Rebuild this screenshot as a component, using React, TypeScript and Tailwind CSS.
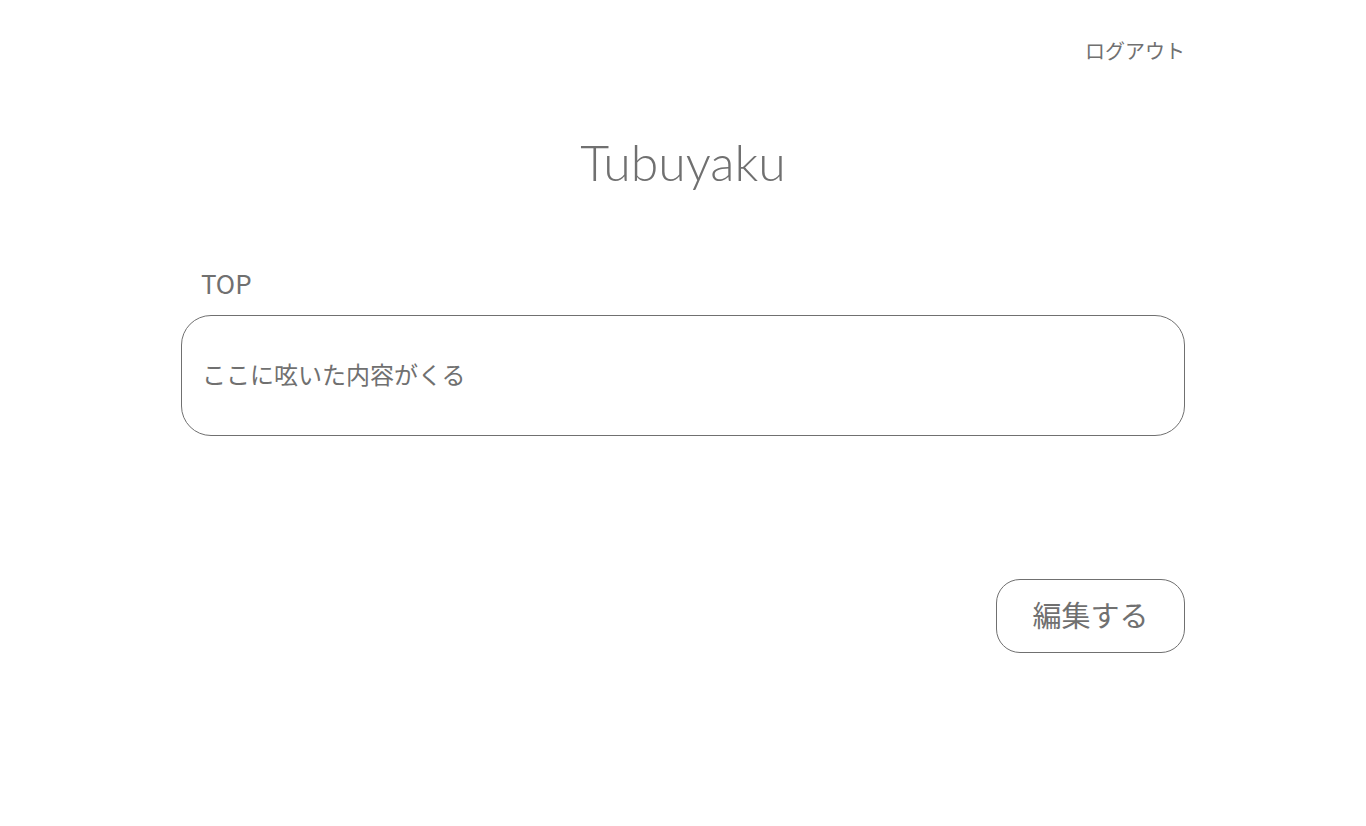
import React from 'react'

const App = () => {
  return (
    <div className="min-h-screen bg-white text-[#707070] font-['Noto_Sans_CJK_JP','Noto_Sans',sans-serif]">
      <div className="w-[1004px] mx-auto flex flex-col">
        <header className="flex justify-end pt-[36px]">
          <button className="text-[20px] leading-[30px]">ログアウト</button>
        </header>

        <h1 className="mt-[66px] text-center text-[50px] leading-[60px] font-light font-['Lato','Noto_Sans_CJK_JP',sans-serif]">
          Tubuyaku
        </h1>

        <section className="mt-[75px]">
          <h2 className="pl-[20px] text-[26px] leading-[32px]">TOP</h2>
          <div className="mt-[16px] h-[121px] border border-[#707070] rounded-[30px] flex items-center px-[20px] pb-[4px]">
            <p className="text-[24px] leading-[32px]">ここに呟いた内容がくる</p>
          </div>
        </section>

        <div className="flex justify-end mt-[143px]">
          <button className="w-[189px] h-[74px] border border-[#707070] rounded-[24px] text-[29px] flex items-center justify-center pb-[2px]">
            編集する
          </button>
        </div>
      </div>
    </div>
  )
}

export default App
